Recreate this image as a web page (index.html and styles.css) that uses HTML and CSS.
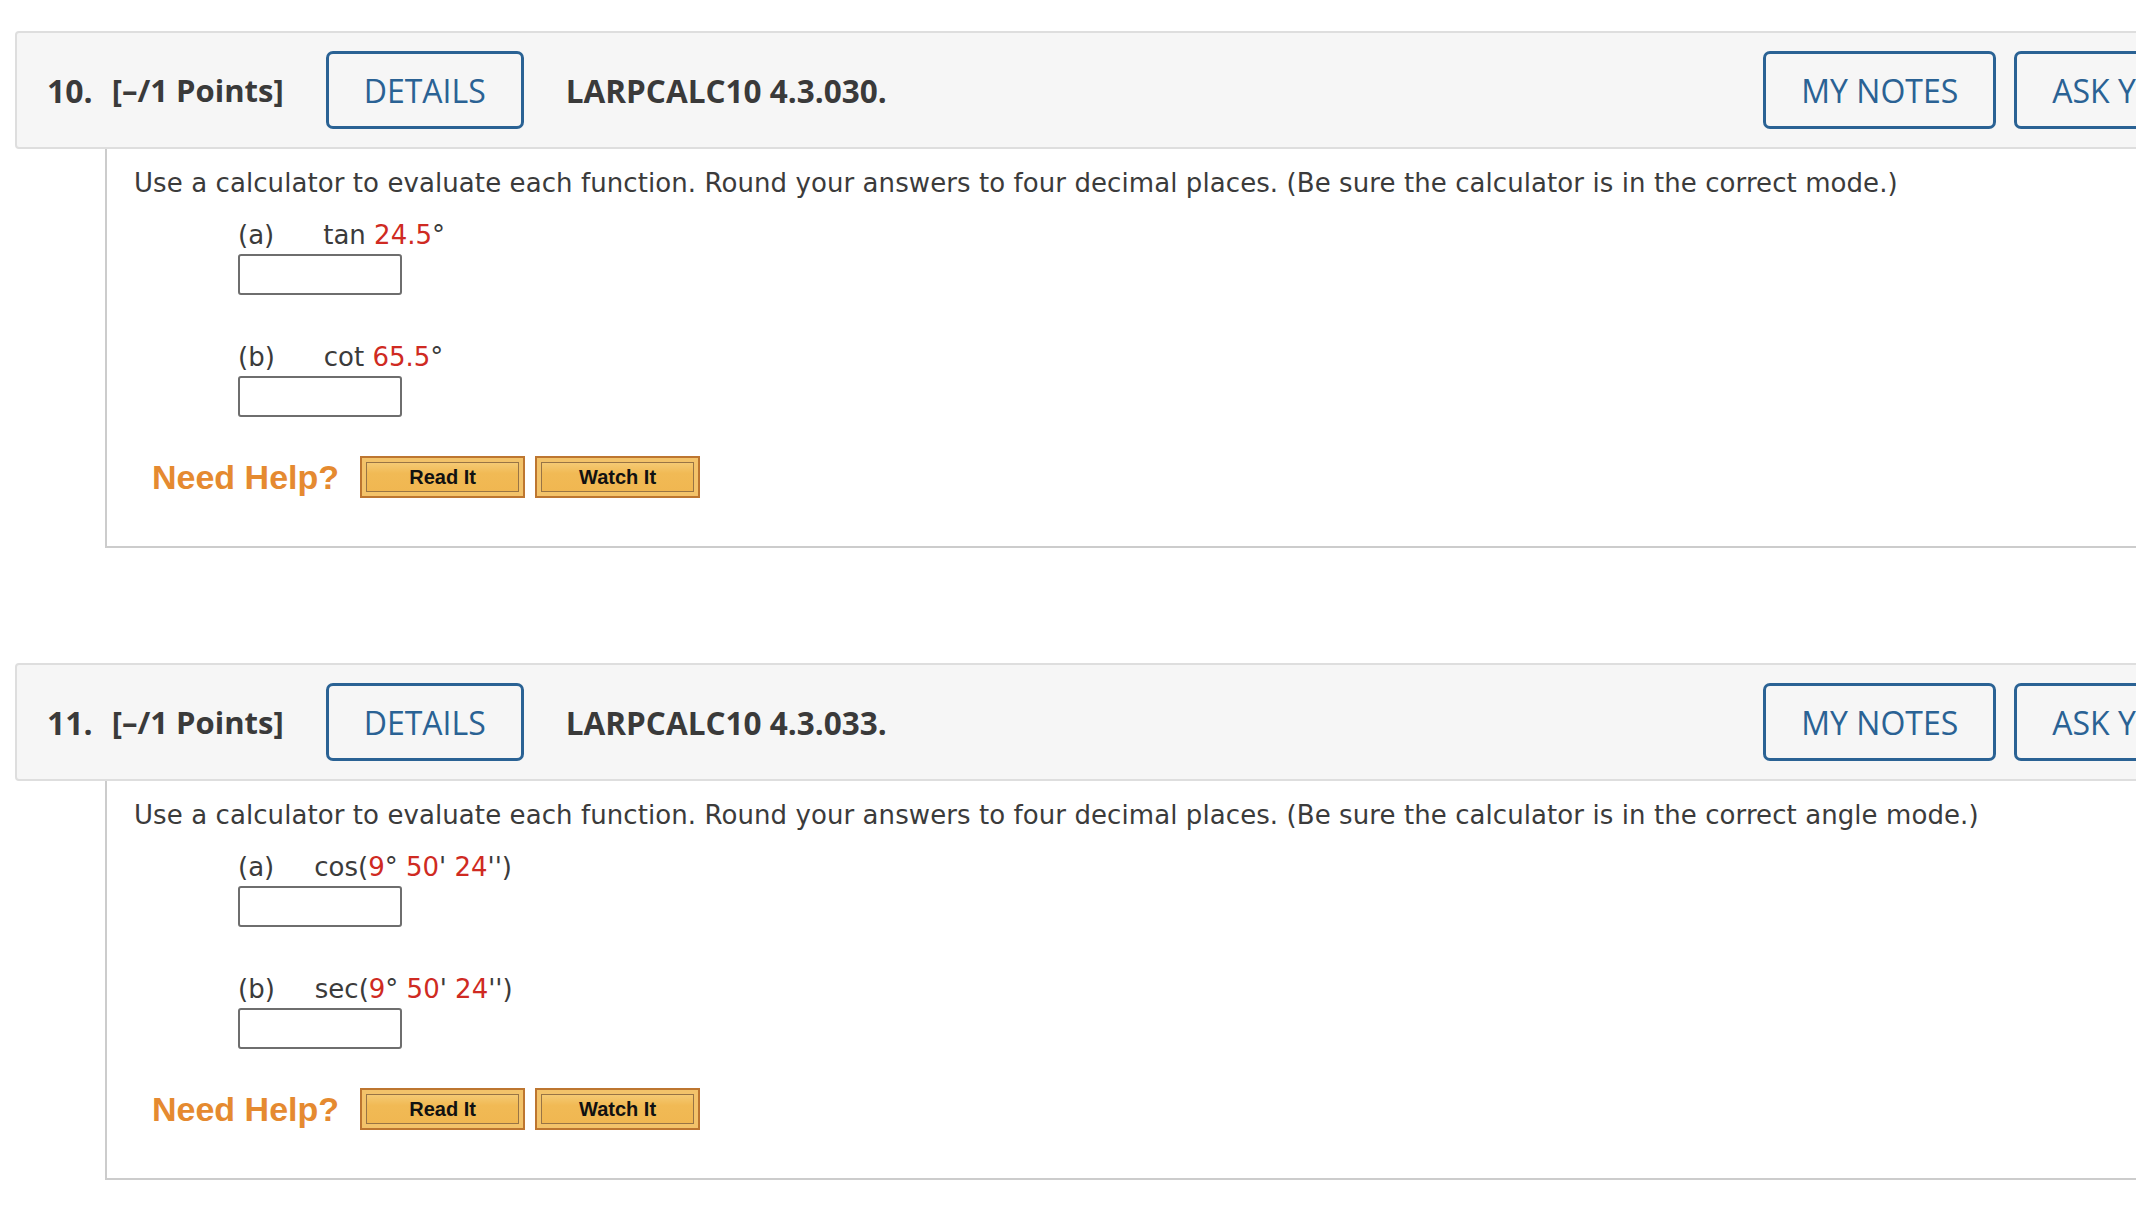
FILE: index.html
```html
<!DOCTYPE html>
<html lang="en">
<head>
<meta charset="utf-8">
<title>Questions</title>
<link rel="stylesheet" href="styles.css">
</head>
<body>
<div class="page">
  <section class="question">
    <header class="q-head">
      <div class="q-left">
        <span class="q-num">10.</span>
        <span class="q-points">[–/1 Points]</span>
        <button class="btn-outline">DETAILS</button>
        <span class="q-title">LARPCALC10 4.3.030.</span>
      </div>
      <div class="q-right">
        <button class="btn-outline">MY NOTES</button>
        <button class="btn-outline">ASK YOUR TEACHER</button>
      </div>
    </header>
    <div class="q-body">
      <p class="q-text">Use a calculator to evaluate each function. Round your answers to four decimal places. (Be sure the calculator is in the correct mode.)</p>
      <div class="part">
        <div class="part-label"><span class="letter">(a)</span><span>tan <span class="red">24.5</span>°</span></div>
        <input class="answer" type="text">
      </div>
      <div class="part">
        <div class="part-label"><span class="letter">(b)</span><span>cot <span class="red">65.5</span>°</span></div>
        <input class="answer" type="text">
      </div>
      <div class="help">
        <span class="help-label">Need Help?</span>
        <button class="help-btn">Read It</button>
        <button class="help-btn">Watch It</button>
      </div>
    </div>
  </section>

  <section class="question">
    <header class="q-head">
      <div class="q-left">
        <span class="q-num">11.</span>
        <span class="q-points">[–/1 Points]</span>
        <button class="btn-outline">DETAILS</button>
        <span class="q-title">LARPCALC10 4.3.033.</span>
      </div>
      <div class="q-right">
        <button class="btn-outline">MY NOTES</button>
        <button class="btn-outline">ASK YOUR TEACHER</button>
      </div>
    </header>
    <div class="q-body">
      <p class="q-text">Use a calculator to evaluate each function. Round your answers to four decimal places. (Be sure the calculator is in the correct angle mode.)</p>
      <div class="part">
        <div class="part-label tight"><span class="letter">(a)</span><span>cos(<span class="red">9</span>° <span class="red">50</span>' <span class="red">24</span>'')</span></div>
        <input class="answer" type="text">
      </div>
      <div class="part">
        <div class="part-label tight"><span class="letter">(b)</span><span>sec(<span class="red">9</span>° <span class="red">50</span>' <span class="red">24</span>'')</span></div>
        <input class="answer" type="text">
      </div>
      <div class="help">
        <span class="help-label">Need Help?</span>
        <button class="help-btn">Read It</button>
        <button class="help-btn">Watch It</button>
      </div>
    </div>
  </section>
</div>
</body>
</html>
```

FILE: styles.css
```css
html, body {
  margin: 0;
  padding: 0;
  overflow: hidden;
  background: #ffffff;
}

.page {
  padding: 31px 0 0 15px;
  width: 2404px;
}

.question + .question {
  margin-top: 115px;
}

.q-head {
  box-sizing: border-box;
  display: flex;
  align-items: center;
  height: 118px;
  padding: 0 30px 0 30px;
  background: #f6f6f6;
  border: 2px solid #dedede;
  border-radius: 4px;
  font-family: "Open Sans", "Liberation Sans", sans-serif;
  color: #3a3a3a;
}

.q-left {
  display: flex;
  align-items: center;
}

.q-num {
  font-size: 32px;
  font-weight: 700;
  margin-right: 19px;
}

.q-points {
  font-size: 31px;
  font-weight: 700;
  margin-right: 42px;
}

.q-title {
  font-size: 31.5px;
  font-weight: 700;
  margin-left: 42px;
}

.q-right {
  display: flex;
  align-items: center;
  gap: 18px;
  margin-left: auto;
}

.btn-outline {
  box-sizing: border-box;
  height: 78px;
  padding: 0 35px;
  background: transparent;
  border: 3px solid #2a6294;
  border-radius: 7px;
  color: #2a6294;
  font-family: "Open Sans", "Liberation Sans", sans-serif;
  font-size: 32px;
  font-weight: 500;
  white-space: nowrap;
}

.q-body {
  box-sizing: border-box;
  height: 399px;
  margin-left: 90px;
  padding: 17px 0 0 27px;
  border-left: 2px solid #cccccc;
  border-bottom: 2px solid #cccccc;
  font-family: "DejaVu Sans", Verdana, sans-serif;
  font-size: 26px;
  color: #3b3b3b;
}

.q-text {
  margin: 0;
  line-height: 34px;
  letter-spacing: 0.08px;
  white-space: nowrap;
}

.part {
  padding-left: 104px;
  margin-top: 18px;
}

.part + .part {
  margin-top: 45px;
}

.part-label {
  line-height: 34px;
  display: flex;
}

.letter {
  margin-right: 49px;
}

.part-label.tight .letter {
  margin-right: 40px;
}

.red {
  color: #cf2a22;
}

.answer {
  box-sizing: border-box;
  display: block;
  width: 164px;
  height: 41px;
  margin-top: 2px;
  border: 2px solid #6e6e6e;
  border-radius: 3px;
  background: #ffffff;
}

.help {
  display: flex;
  align-items: center;
  margin-top: 39px;
  padding-left: 18px;
}

.help-label {
  font-family: "Liberation Sans", Arial, sans-serif;
  font-weight: 700;
  font-size: 34px;
  color: #e58a30;
  margin-right: 21px;
}

.help-btn {
  box-sizing: border-box;
  width: 165px;
  height: 42px;
  margin-right: 10px;
  border: 2px solid #bd7630;
  background: linear-gradient(#f7d182, #f1ba55 40%, #f0b650);
  box-shadow: inset 0 0 0 4px #f3c36a, inset 0 0 0 5px #987445;
  font-family: "Liberation Sans", Arial, sans-serif;
  font-weight: 700;
  font-size: 20px;
  color: #111111;
  padding: 0;
}
```
